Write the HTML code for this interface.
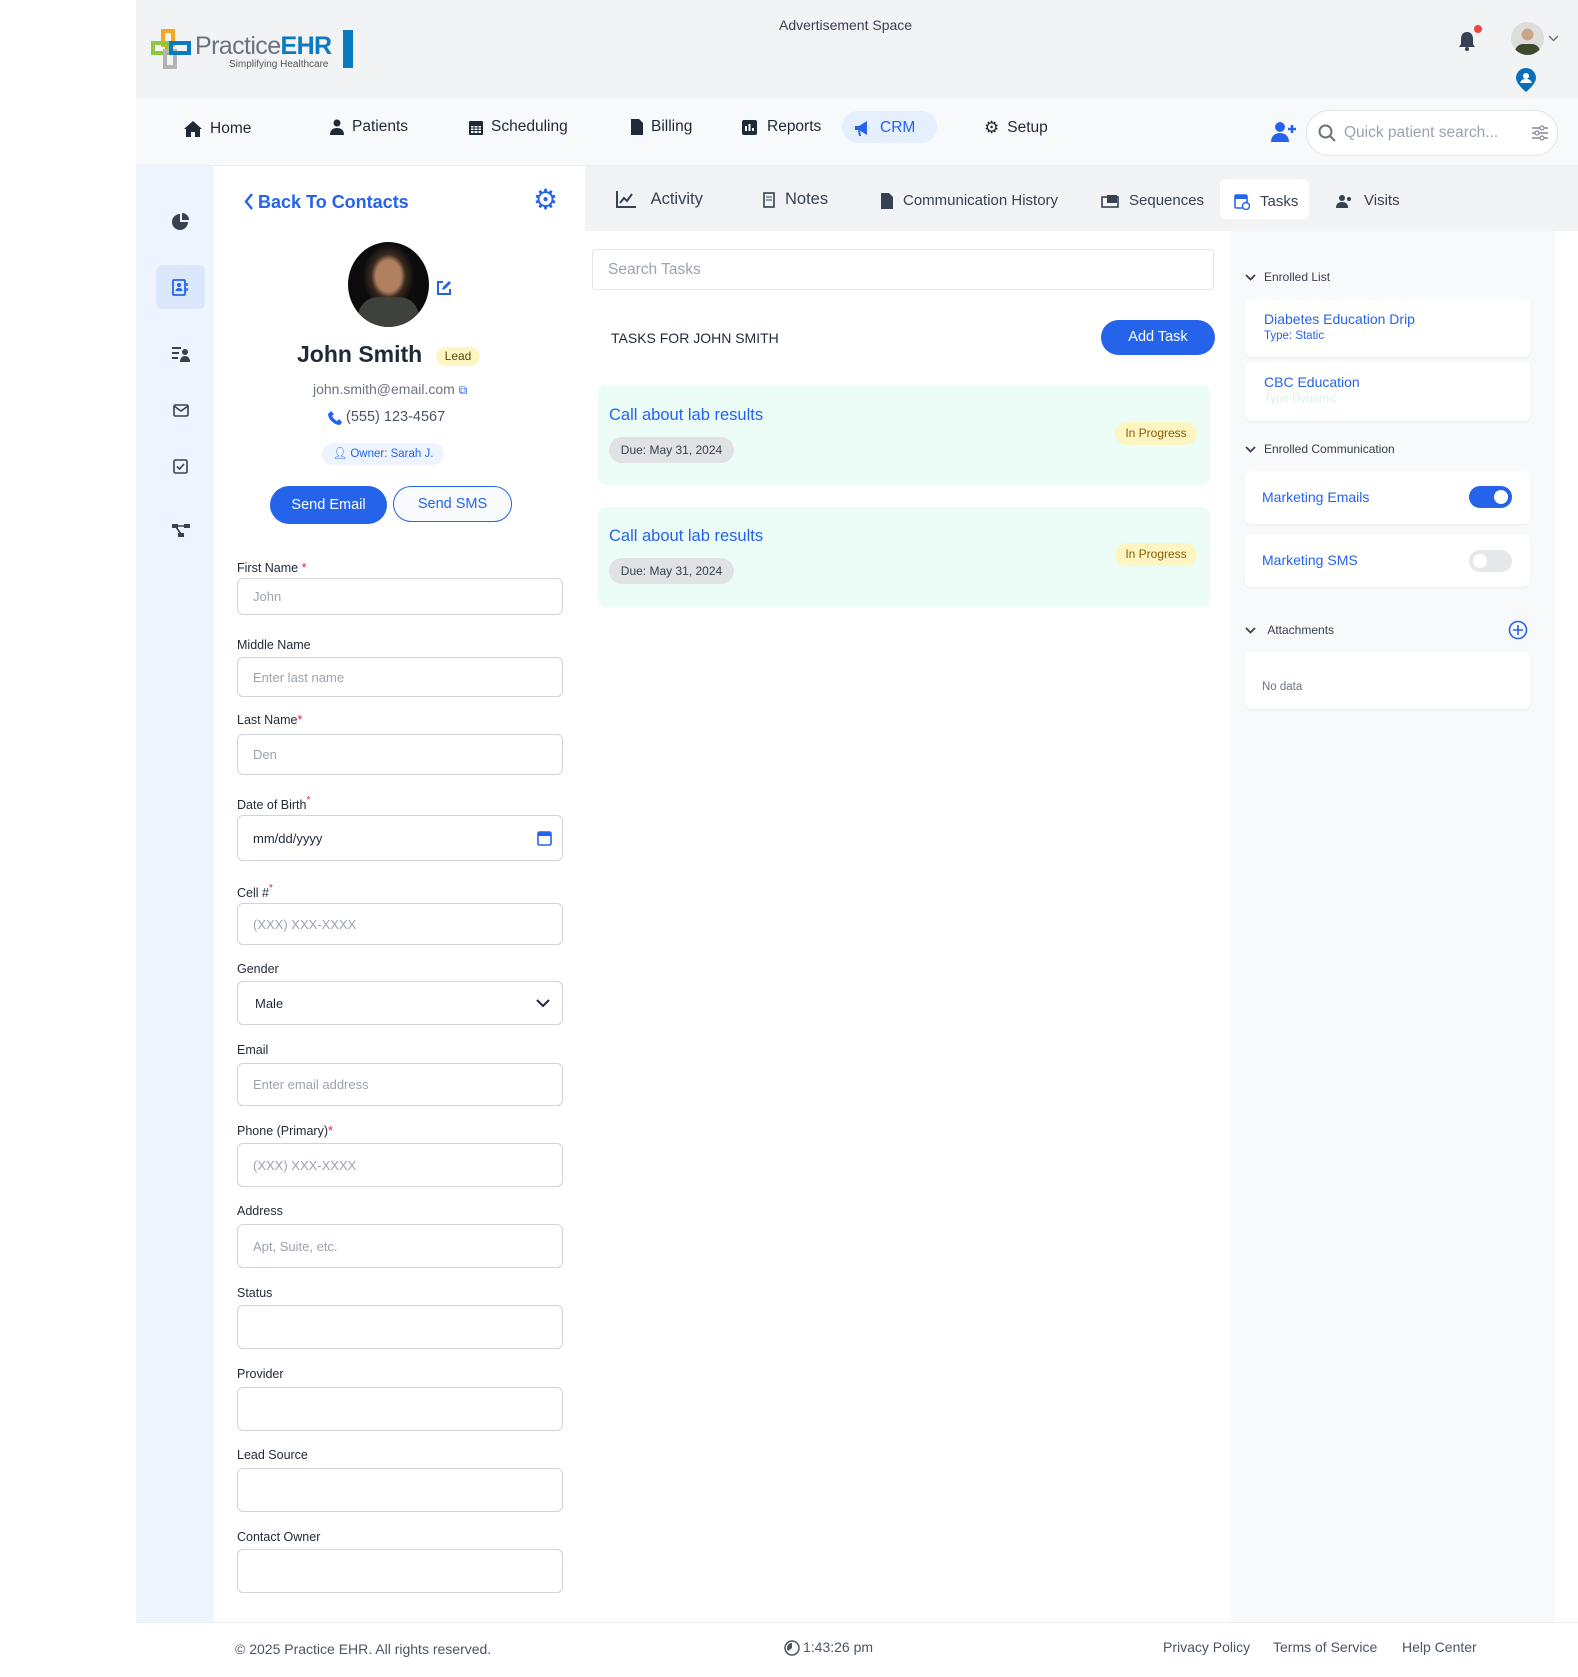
<!DOCTYPE html>
<html><head><meta charset="utf-8"><style>
*{box-sizing:border-box;margin:0;padding:0}
body{width:1578px;height:1677px;position:relative;background:#fff;font-family:"Liberation Sans",sans-serif;color:#1f2937;overflow:hidden}
.a{position:absolute}
.lbl{position:absolute;left:237px;font-size:12.5px;color:#1f2937}
.lbl b{color:#e11d48;font-weight:normal}
.inp{position:absolute;left:237px;width:326px;border:1px solid #cfd4da;border-radius:6px;background:#fff;font-size:13px;color:#9ca3af;padding-left:15px;display:flex;align-items:center}
.tab{position:absolute;top:192px;font-size:15px;color:#374151;display:flex;align-items:center;gap:10px}
.card{position:absolute;left:1245px;width:285px;background:#fff;border-radius:6px;box-shadow:0 1px 2px rgba(0,0,0,.05)}
.sec{position:absolute;left:1245px;font-size:12px;color:#374151;display:flex;align-items:center;gap:8px}
.task{position:absolute;left:598px;width:612px;height:100px;background:#ecfdf8;border-radius:8px}
.nv{position:absolute;font-size:15.5px;color:#1f2937;display:flex;align-items:center;gap:8px}
</style></head><body>
<div class="a" style="left:136px;top:0;width:1442px;height:98px;background:#f2f3f5"></div>
<div class="a" style="left:136px;top:98px;width:1442px;height:68px;background:#f8f9fb;border-bottom:1px solid #eceef1"></div>
<svg class="a" style="left:151px;top:29px" width="45" height="42" viewBox="0 0 45 42"><rect x="12" y="2" width="10" height="14" fill="none" stroke="#f5a623" stroke-width="4"/><rect x="2" y="14" width="14" height="10" fill="none" stroke="#8dc63f" stroke-width="4"/><rect x="14" y="22" width="10" height="16" fill="none" stroke="#b3b3b3" stroke-width="4"/><rect x="20" y="14" width="18" height="10" fill="none" stroke="#0a7bc1" stroke-width="4"/></svg>
<div class="a" style="left:195px;top:32px;font-size:25px;color:#6b7280;letter-spacing:-.6px">Practice<span style="color:#0a7bc1;font-weight:bold">EHR</span></div>
<div class="a" style="left:343px;top:30px;width:10px;height:38px;background:#0a7bc1"></div>
<div class="a" style="left:229px;top:59px;font-size:10px;color:#555">Simplifying Healthcare</div>
<div class="a" style="left:779px;top:17px;font-size:14px;color:#374151">Advertisement Space</div>
<svg class="a" style="left:1458px;top:31px" width="18" height="20" viewBox="0 0 18 20"><path d="M9 1C5 1 3 4 3 8v5l-2 3h16l-2-3V8c0-4-2-7-6-7z" fill="#374151"/><circle cx="9" cy="18" r="2" fill="#374151"/></svg>
<div class="a" style="left:1474px;top:25px;width:8px;height:8px;border-radius:50%;background:#ef4444"></div>
<div class="a" style="left:1511px;top:22px;width:33px;height:33px;border-radius:50%;background:radial-gradient(circle at 50% 38%,#c9a58a 0 22%,#ddd 23%);overflow:hidden"><div style="margin:22px 0 0 4px;width:25px;height:14px;border-radius:8px 8px 0 0;background:#3d4a2f"></div></div>
<svg class="a" style="left:1548px;top:35px" width="11" height="7" viewBox="0 0 11 7"><path d="M1 1l4.5 4.5L10 1" fill="none" stroke="#6b7280" stroke-width="1.4"/></svg>
<svg class="a" style="left:1516px;top:68px" width="20" height="24" viewBox="0 0 20 24"><path d="M10 0a10 10 0 0 0-10 10c0 6 10 14 10 14s10-8 10-14A10 10 0 0 0 10 0z" fill="#0a6fb8"/><circle cx="10" cy="8" r="3" fill="#fff"/><path d="M4 15c1-3 3-4 6-4s5 1 6 4" fill="#fff"/></svg>
<div class="nv" style="top:120px;left:184px"><svg width="18" height="16" viewBox="0 0 18 16"><path d="M9 0L0 8h2v8h5v-5h4v5h5V8h2z" fill="#1f2937"/></svg>Home</div>
<div class="nv" style="top:118px;left:330px"><svg width="14" height="16" viewBox="0 0 14 16"><circle cx="7" cy="4" r="3.5" fill="#1f2937"/><path d="M0 16c0-5 3-7 7-7s7 2 7 7z" fill="#1f2937"/></svg>Patients</div>
<div class="nv" style="top:118px;left:469px"><svg width="14" height="16" viewBox="0 0 14 16"><rect x="0" y="2" width="14" height="14" rx="1" fill="#1f2937"/><rect x="2" y="7" width="10" height="7" fill="#fff"/><path d="M2 9h10M2 11.5h10M5 7v7M9 7v7" stroke="#1f2937"/></svg>Scheduling</div>
<div class="nv" style="top:118px;left:631px"><svg width="12" height="16" viewBox="0 0 12 16"><path d="M0 0h8l4 4v12H0z" fill="#1f2937"/></svg>Billing</div>
<div class="nv" style="top:118px;left:742px;gap:10px"><svg width="15" height="15" viewBox="0 0 15 15"><rect width="15" height="15" rx="2" fill="#1f2937"/><path d="M4 11V6M7.5 11V4M11 11V8" stroke="#fff" stroke-width="2"/></svg>Reports</div>
<div class="a" style="top:111px;left:842px;width:95px;height:32px;border-radius:16px;background:#e6effd"></div>
<div class="nv" style="top:119px;left:855px;color:#2563eb;gap:9px"><svg width="16" height="15" viewBox="0 0 16 15"><path d="M0 5h4l8-5v14l-8-5H0zM3 9l1 6h2l-1-6" fill="#2563eb"/></svg>CRM</div>
<div class="nv" style="top:118px;left:984px"><span style="font-size:17px">⚙</span>Setup</div>
<svg class="a" style="left:1271px;top:121px" width="26" height="22" viewBox="0 0 26 22"><circle cx="9" cy="6" r="5" fill="#2563eb"/><path d="M0 21c0-6 4-9 9-9s9 3 9 9z" fill="#2563eb"/><path d="M21 4v8M17 8h8" stroke="#2563eb" stroke-width="2.5"/></svg>
<div class="a" style="left:1306px;top:110px;width:252px;height:46px;border:1px solid #e5e7eb;border-radius:23px;background:#fff"></div>
<svg class="a" style="left:1318px;top:124px" width="18" height="18" viewBox="0 0 18 18"><circle cx="7.5" cy="7.5" r="6" fill="none" stroke="#6b7280" stroke-width="2"/><path d="M12 12l5 5" stroke="#6b7280" stroke-width="2"/></svg>
<div class="a" style="left:1344px;top:124px;font-size:15.5px;color:#9ca3af">Quick patient search...</div>
<svg class="a" style="left:1532px;top:125px" width="16" height="16" viewBox="0 0 16 16"><path d="M0 3h16M0 8h16M0 13h16" stroke="#6b7280" stroke-width="1.3"/><circle cx="10" cy="3" r="2" fill="#fff" stroke="#6b7280"/><circle cx="5" cy="8" r="2" fill="#fff" stroke="#6b7280"/><circle cx="10" cy="13" r="2" fill="#fff" stroke="#6b7280"/></svg>
<div class="a" style="left:136px;top:166px;width:78px;height:1456px;background:#eef5fe"></div>
<div class="a" style="left:156px;top:265px;width:49px;height:44px;border-radius:6px;background:#dbe8fc"></div>
<svg class="a" style="left:172px;top:213px" width="17" height="17" viewBox="0 0 17 17"><path d="M8 1a8 8 0 1 0 8 8H8z" fill="#374151"/><path d="M10 0v7h7a7 7 0 0 0-7-7z" fill="#374151"/></svg>
<svg class="a" style="left:172px;top:279px" width="17" height="17" viewBox="0 0 17 17"><rect x="1" y="1" width="12" height="15" rx="1" fill="none" stroke="#2563eb" stroke-width="1.8"/><circle cx="7" cy="6" r="2" fill="#2563eb"/><path d="M3.5 12c0-2 2-3 3.5-3s3.5 1 3.5 3" fill="#2563eb"/><path d="M15 4v3M15 9v3" stroke="#2563eb" stroke-width="1.6"/></svg>
<svg class="a" style="left:172px;top:346px" width="18" height="16" viewBox="0 0 18 16"><path d="M0 2h9M0 7h7M0 12h6" stroke="#374151" stroke-width="2"/><circle cx="13" cy="6" r="3" fill="#374151"/><path d="M8 16c0-4 2-6 5-6s5 2 5 6z" fill="#374151"/></svg>
<svg class="a" style="left:173px;top:404px" width="16" height="13" viewBox="0 0 16 13"><rect x="1" y="1" width="14" height="11" rx="1.5" fill="none" stroke="#374151" stroke-width="1.6"/><path d="M1 2l7 5 7-5" fill="none" stroke="#374151" stroke-width="1.6"/></svg>
<svg class="a" style="left:173px;top:459px" width="15" height="15" viewBox="0 0 15 15"><rect x="1" y="1" width="13" height="13" rx="1.5" fill="none" stroke="#374151" stroke-width="1.6"/><path d="M4 7.5l2.5 2.5L11 5" fill="none" stroke="#374151" stroke-width="1.6"/></svg>
<svg class="a" style="left:172px;top:523px" width="18" height="15" viewBox="0 0 18 15"><rect x="0" y="1" width="6" height="4" fill="#374151"/><rect x="12" y="1" width="6" height="4" fill="#374151"/><rect x="6" y="10" width="6" height="4" fill="#374151"/><path d="M3 3h12M4 4l5 7" stroke="#374151" stroke-width="1.6"/></svg>
<svg class="a" style="left:244px;top:193px" width="10" height="17" viewBox="0 0 10 17"><path d="M8 1L2 8.5 8 16" fill="none" stroke="#2563eb" stroke-width="2.4"/></svg>
<div class="a" style="left:258px;top:192px;font-size:18px;font-weight:bold;color:#2563eb">Back To Contacts</div>
<div class="a" style="left:533px;top:186px;font-size:28px;color:#2563eb;line-height:1">⚙</div>
<div class="a" style="left:348px;top:242px;width:81px;height:85px;border-radius:50%;background:radial-gradient(ellipse at 50% 40%,#b08060 0 22%,#3a2a20 30%,#0c0c0c 45%);overflow:hidden"><div style="margin:55px 0 0 10px;width:61px;height:40px;border-radius:20px 20px 0 0;background:#3f423c"></div></div>
<svg class="a" style="left:436px;top:280px" width="16" height="16" viewBox="0 0 16 16"><path d="M7 2H2v12h12V9" fill="none" stroke="#2563eb" stroke-width="2"/><path d="M6 10l1-3 6-6 2 2-6 6z" fill="#2563eb"/></svg>
<div class="a" style="left:297px;top:341px;font-size:23px;font-weight:bold;color:#1f2937">John Smith</div>
<div class="a" style="left:436px;top:347px;width:44px;height:19px;border-radius:10px;background:#fdf6c3;font-size:12px;color:#5b4a07;text-align:center;line-height:19px">Lead</div>
<div class="a" style="left:313px;top:381px;font-size:14px;color:#6b7280">john.smith@email.com <span style="color:#2563eb;font-size:12px">⧉</span></div>
<svg class="a" style="left:328px;top:411px" width="14" height="14" viewBox="0 0 14 14"><path d="M3 0l3 3-2 2c1 2 3 4 5 5l2-2 3 3-2 3C6 14 0 8 0 3z" fill="#2563eb"/></svg>
<div class="a" style="left:346px;top:409px;font-size:14.5px;color:#4b5563">(555) 123-4567</div>
<div class="a" style="left:322px;top:443px;width:122px;height:22px;border-radius:11px;background:#eef4fe;font-size:11.5px;color:#2563eb;text-align:center;line-height:22px">👤︎ Owner: Sarah J.</div>
<div class="a" style="left:270px;top:486px;width:117px;height:38px;border-radius:19px;background:#2563eb;color:#fff;font-size:14.5px;text-align:center;line-height:38px">Send Email</div>
<div class="a" style="left:393px;top:486px;width:119px;height:36px;border-radius:18px;border:1px solid #2563eb;background:#f8fafc;color:#2563eb;font-size:14.5px;text-align:center;line-height:34px">Send SMS</div>
<div class="lbl" style="top:561px">First Name <b>*</b></div><div class="inp" style="top:578px;height:37px">John</div>
<div class="lbl" style="top:638px">Middle Name</div><div class="inp" style="top:657px;height:40px">Enter last name</div>
<div class="lbl" style="top:713px">Last Name<b>*</b></div><div class="inp" style="top:734px;height:41px">Den</div>
<div class="lbl" style="top:795px">Date of Birth<b style="vertical-align:6px;font-size:10px">*</b></div><div class="inp" style="top:815px;height:46px;color:#1f2937">mm/dd/yyyy<svg style="position:absolute;right:10px;top:14px" width="15" height="16" viewBox="0 0 15 16"><rect x="1" y="2" width="13" height="13" rx="1.5" fill="none" stroke="#2563eb" stroke-width="1.6"/><rect x="1" y="2" width="13" height="4" fill="#2563eb"/></svg></div>
<div class="lbl" style="top:883px">Cell #<b style="vertical-align:6px;font-size:10px">*</b></div><div class="inp" style="top:903px;height:42px">(XXX) XXX-XXXX</div>
<div class="lbl" style="top:962px">Gender</div><div class="inp" style="top:981px;height:44px;color:#1f2937;padding-left:17px">Male<svg style="position:absolute;right:12px;top:17px" width="14" height="9" viewBox="0 0 14 9"><path d="M1 1l6 6 6-6" fill="none" stroke="#1f2937" stroke-width="2"/></svg></div>
<div class="lbl" style="top:1043px">Email</div><div class="inp" style="top:1063px;height:43px">Enter email address</div>
<div class="lbl" style="top:1124px">Phone (Primary)<b>*</b></div><div class="inp" style="top:1143px;height:44px">(XXX) XXX-XXXX</div>
<div class="lbl" style="top:1204px">Address</div><div class="inp" style="top:1224px;height:44px">Apt, Suite, etc.</div>
<div class="lbl" style="top:1286px">Status</div><div class="inp" style="top:1305px;height:44px"></div>
<div class="lbl" style="top:1367px">Provider</div><div class="inp" style="top:1387px;height:44px"></div>
<div class="lbl" style="top:1448px">Lead Source</div><div class="inp" style="top:1468px;height:44px"></div>
<div class="lbl" style="top:1530px">Contact Owner</div><div class="inp" style="top:1549px;height:44px"></div>
<div class="a" style="left:585px;top:166px;width:993px;height:65px;background:#f2f3f5"></div>
<div class="a" style="left:1220px;top:179px;width:89px;height:40px;border-radius:6px;background:#fff"></div>
<div class="tab" style="left:616px;font-size:16.5px;top:190px"><svg width="20" height="17" viewBox="0 0 20 17"><path d="M1 0v16h19" fill="none" stroke="#374151" stroke-width="2"/><path d="M4 12l4-5 3 3 5-7" fill="none" stroke="#374151" stroke-width="2"/></svg>&nbsp;Activity</div>
<div class="tab" style="left:763px;font-size:16.5px;top:190px"><svg width="12" height="16" viewBox="0 0 12 16"><rect x="1" y="1" width="10" height="14" fill="none" stroke="#374151" stroke-width="1.6"/><path d="M3 5h6M3 8h6" stroke="#374151"/></svg>Notes</div>
<div class="tab" style="left:881px"><svg width="12" height="16" viewBox="0 0 12 16"><path d="M0 0h8l4 4v12H0z" fill="#374151"/></svg>Communication History</div>
<div class="tab" style="left:1101px"><svg width="18" height="14" viewBox="0 0 18 14"><rect x="1" y="3" width="16" height="10" fill="none" stroke="#374151" stroke-width="1.6"/><rect x="6" y="1" width="10" height="8" fill="#374151"/></svg>Sequences</div>
<div class="tab" style="left:1234px"><svg width="16" height="18" viewBox="0 0 16 18"><rect x="1" y="3" width="12" height="13" rx="1.5" fill="none" stroke="#2563eb" stroke-width="1.6"/><rect x="1" y="3" width="12" height="4" fill="#2563eb"/><circle cx="12" cy="14" r="3.5" fill="#fff" stroke="#2563eb" stroke-width="1.4"/></svg>Tasks</div>
<div class="tab" style="left:1336px"><svg width="18" height="14" viewBox="0 0 18 14"><circle cx="6" cy="4" r="3" fill="#374151"/><path d="M0 14c0-4 2-6 6-6s6 2 6 6z" fill="#374151"/><circle cx="13" cy="5" r="2" fill="#374151"/></svg>Visits</div>
<div class="a" style="left:592px;top:249px;width:622px;height:41px;border:1px solid #e2e5e9;border-radius:4px;font-size:15.5px;color:#9ca3af;padding:11px 15px">Search Tasks</div>
<div class="a" style="left:611px;top:330px;font-size:14px;color:#1f2937">TASKS FOR JOHN SMITH</div>
<div class="a" style="left:1101px;top:320px;width:114px;height:35px;border-radius:18px;background:#2563eb;color:#fff;font-size:14.5px;text-align:center;line-height:35px">Add Task</div>
<div class="task" style="top:385px"></div>
<div class="a" style="left:609px;top:406px;font-size:16.5px;color:#2563eb">Call about lab results</div>
<div class="a" style="left:609px;top:437px;width:125px;height:26px;border-radius:13px;background:#e1e2e3;font-size:12px;color:#374151;text-align:center;line-height:26px">Due: May 31, 2024</div>
<div class="a" style="left:1115px;top:422px;width:82px;height:23px;border-radius:12px;background:#fdf6c3;font-size:12px;color:#8a5a00;text-align:center;line-height:23px">In Progress</div>
<div class="task" style="top:507px"></div>
<div class="a" style="left:609px;top:527px;font-size:16.5px;color:#2563eb">Call about lab results</div>
<div class="a" style="left:609px;top:558px;width:125px;height:26px;border-radius:13px;background:#e1e2e3;font-size:12px;color:#374151;text-align:center;line-height:26px">Due: May 31, 2024</div>
<div class="a" style="left:1115px;top:543px;width:82px;height:23px;border-radius:12px;background:#fdf6c3;font-size:12px;color:#8a5a00;text-align:center;line-height:23px">In Progress</div>
<div class="a" style="left:1231px;top:231px;width:324px;height:1391px;background:#f8f9fa"></div>
<div class="sec" style="top:270px"><svg width="11" height="7" viewBox="0 0 11 7"><path d="M1 1l4.5 4.5L10 1" fill="none" stroke="#374151" stroke-width="1.8"/></svg>Enrolled List</div>
<div class="card" style="top:299px;height:58px"><div style="padding:12px 0 0 19px;font-size:14px;color:#2563eb">Diabetes Education Drip</div><div style="padding:3px 0 0 19px;font-size:11.5px;color:#2563eb">Type: Static</div></div>
<div class="card" style="top:362px;height:59px"><div style="padding:12px 0 0 19px;font-size:14px;color:#2563eb">CBC Education</div><div style="padding:3px 0 0 19px;font-size:11.5px;color:#d4f5ea">Type Dynamic</div></div>
<div class="sec" style="top:442px"><svg width="11" height="7" viewBox="0 0 11 7"><path d="M1 1l4.5 4.5L10 1" fill="none" stroke="#374151" stroke-width="1.8"/></svg>Enrolled Communication</div>
<div class="card" style="top:471px;height:53px"><div style="padding:18px 0 0 17px;font-size:14px;color:#2563eb">Marketing Emails</div><div style="position:absolute;right:18px;top:15px;width:43px;height:22px;border-radius:11px;background:#2563eb"><div style="position:absolute;right:4px;top:4px;width:14px;height:14px;border-radius:50%;background:#fff"></div></div></div>
<div class="card" style="top:534px;height:53px"><div style="padding:18px 0 0 17px;font-size:14px;color:#2563eb">Marketing SMS</div><div style="position:absolute;right:18px;top:16px;width:43px;height:22px;border-radius:11px;background:#e5e7eb"><div style="position:absolute;left:4px;top:4px;width:14px;height:14px;border-radius:50%;background:#fff"></div></div></div>
<div class="sec" style="top:623px"><svg width="11" height="7" viewBox="0 0 11 7"><path d="M1 1l4.5 4.5L10 1" fill="none" stroke="#374151" stroke-width="1.8"/></svg>&nbsp;Attachments</div>
<svg class="a" style="left:1508px;top:620px" width="20" height="20" viewBox="0 0 20 20"><circle cx="10" cy="10" r="8.5" fill="none" stroke="#2563eb" stroke-width="1.6"/><path d="M10 5v10M5 10h10" stroke="#2563eb" stroke-width="1.6"/></svg>
<div class="card" style="top:652px;height:57px"><div style="padding:29px 0 0 17px;font-size:11.5px;color:#6b7280">No data</div></div>
<div class="a" style="left:136px;top:1622px;width:1442px;height:55px;background:#fff;border-top:1px solid #eceef1"></div>
<div class="a" style="left:235px;top:1641px;font-size:14px;color:#4b5563">© 2025 Practice EHR. All rights reserved.</div>
<svg class="a" style="left:784px;top:1640px" width="16" height="16" viewBox="0 0 16 16"><circle cx="8" cy="8" r="7" fill="none" stroke="#4b5563" stroke-width="1.5"/><path d="M8 3v5l-4 3A5 5 0 0 1 8 3z" fill="#4b5563"/></svg>
<div class="a" style="left:803px;top:1639px;font-size:14px;color:#4b5563">1:43:26 pm</div>
<div class="a" style="left:1163px;top:1639px;font-size:14px;color:#4b5563">Privacy Policy</div>
<div class="a" style="left:1273px;top:1639px;font-size:14px;color:#4b5563">Terms of Service</div>
<div class="a" style="left:1402px;top:1639px;font-size:14px;color:#4b5563">Help Center</div>
</body></html>
